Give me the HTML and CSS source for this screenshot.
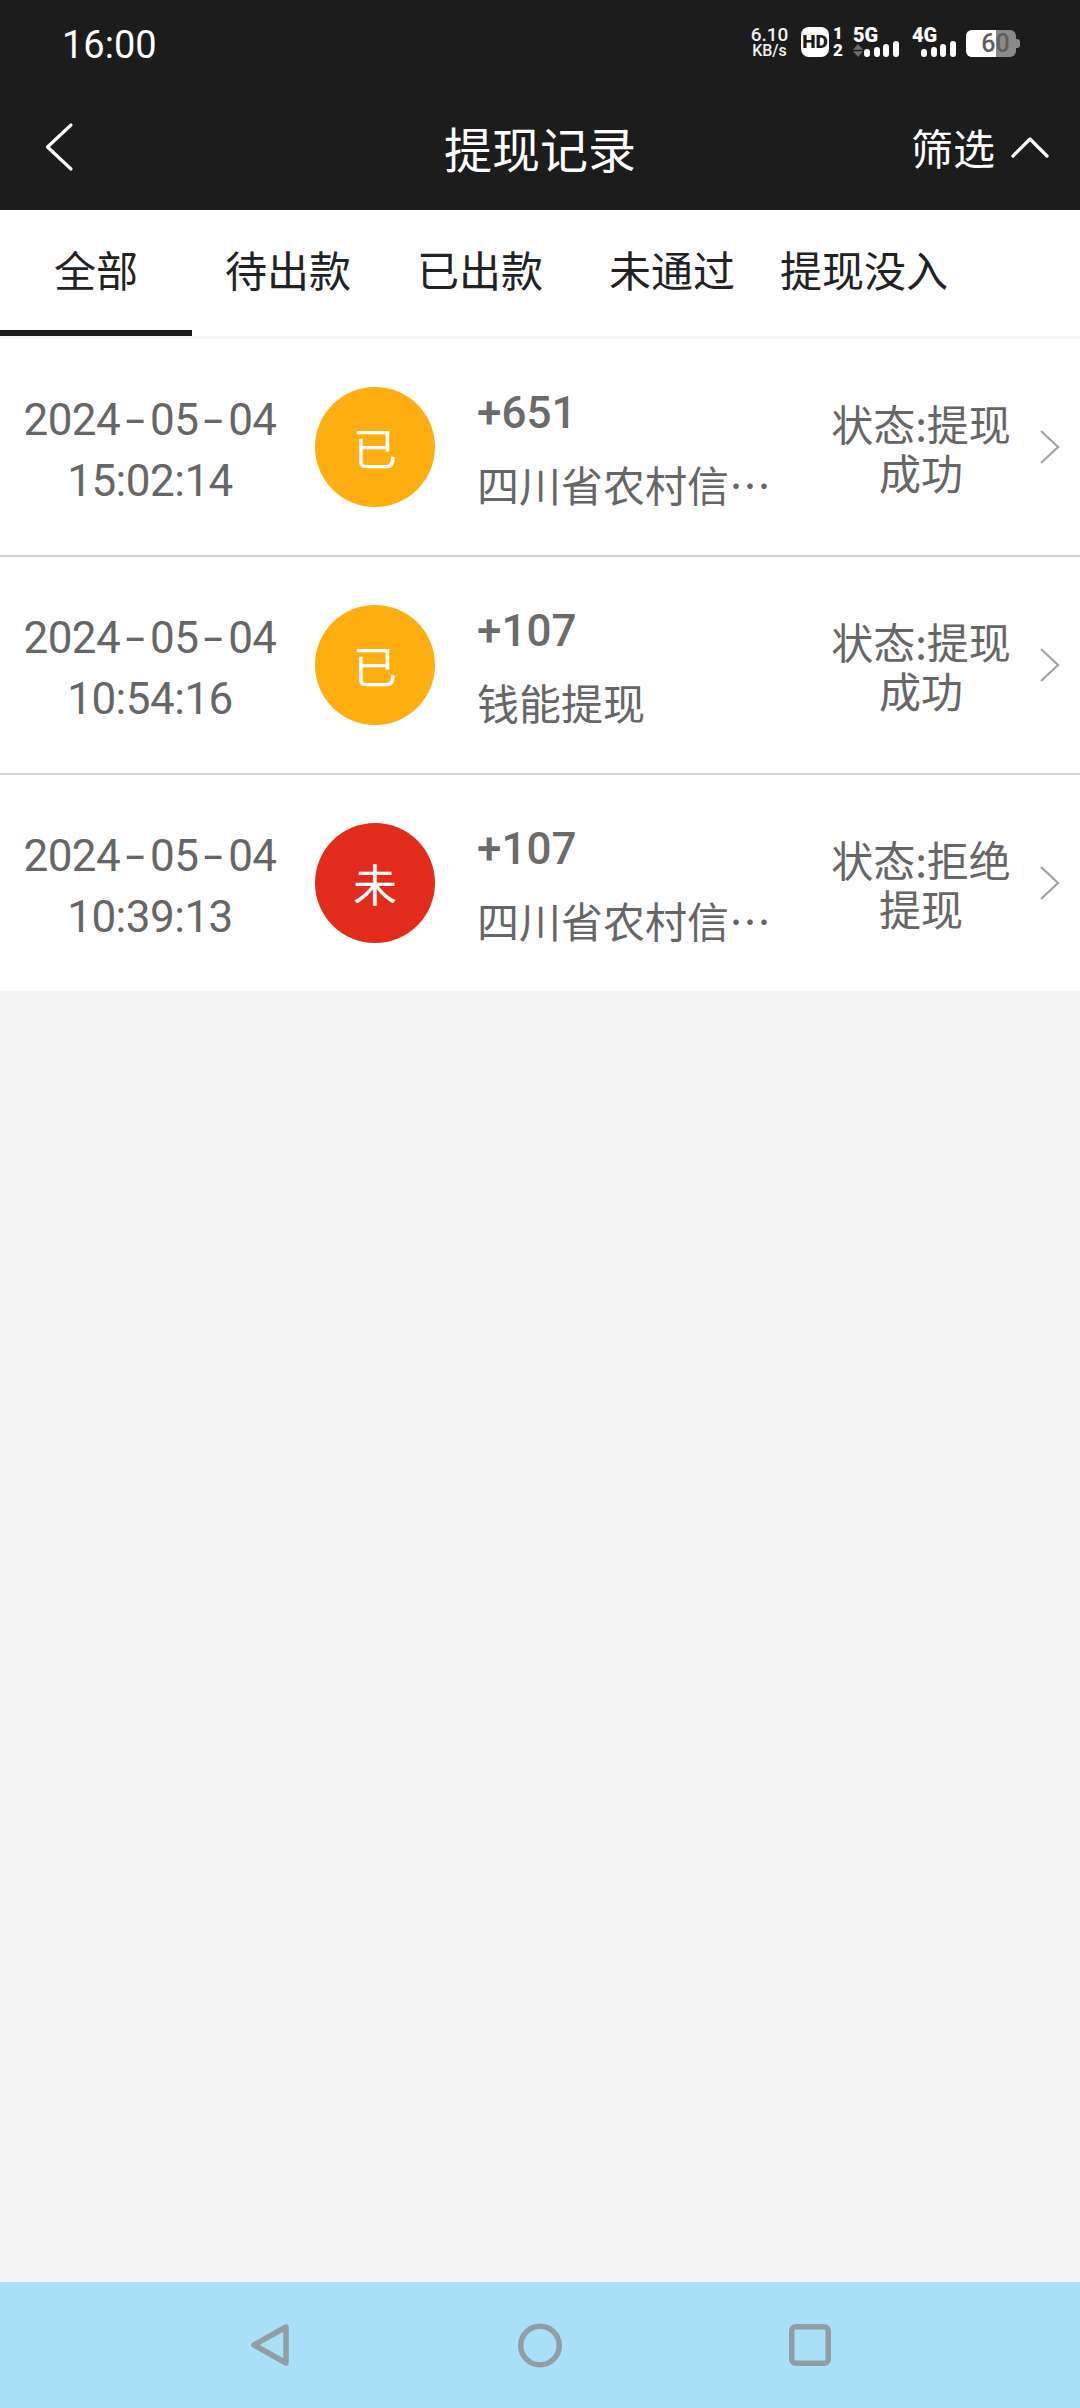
FILE: index.html
```html
<!DOCTYPE html>
<html lang="zh-CN">
<head>
<meta charset="utf-8">
<title>提现记录</title>
<link rel="stylesheet" href="styles.css">
</head>
<body>
<div class="page">
  <header class="top">
    <div class="status">
      <span class="time">16:00</span>
      <div class="indicators">
        <div class="speed"><span class="speed-num">6.10</span><span class="speed-unit">KB/s</span></div>
        <div class="hd"><span class="hd-box">HD</span><span class="hd-nums"><span>1</span><span>2</span></span></div>
        <div class="net net-5g">
          <span class="net-label">5G</span>
          <div class="net-row">
            <svg class="arrows" width="10" height="13" viewBox="0 0 10 13"><path d="M5 0l5 5.700H0zM0 7.300h10L5 13z" fill="#6e6e6e"/></svg>
            <span class="sig s1"></span><span class="sig s2"></span><span class="sig s3"></span><span class="sig s4"></span>
          </div>
        </div>
        <div class="net net-4g">
          <span class="net-label">4G</span>
          <div class="net-row">
            <span class="sig s1"></span><span class="sig s2"></span><span class="sig s3"></span><span class="sig s4"></span>
          </div>
        </div>
        <div class="battery"><div class="batt-body"><div class="batt-fill" style="width:60%"></div><span class="batt-num">60</span></div><span class="batt-cap"></span></div>
      </div>
    </div>
    <div class="nav">
      <svg class="back" width="30" height="50" viewBox="0 0 30 50"><path d="M27 3 3.500 25 27 47" fill="none" stroke="#fff" stroke-width="3.200" stroke-linecap="round" stroke-linejoin="round"/></svg>
      <h1 class="title">提现记录</h1>
      <div class="filter"><span>筛选</span>
        <svg width="38" height="24" viewBox="0 0 38 24"><path d="M2 21 19 4l17 17" fill="none" stroke="#fff" stroke-width="3.200" stroke-linecap="round" stroke-linejoin="round"/></svg>
      </div>
    </div>
  </header>
  <nav class="tabs">
    <span class="tab active">全部</span>
    <span class="tab">待出款</span>
    <span class="tab">已出款</span>
    <span class="tab">未通过</span>
    <span class="tab">提现没入</span>
  </nav>
  <main class="list">
    <div class="row">
      <div class="when"><span>2024<i class="hy">-</i>05<i class="hy">-</i>04</span><span>15:02:14</span></div>
      <div class="badge amber">已</div>
      <div class="info"><span class="amount">+651</span><span class="bank">四川省农村信…</span></div>
      <div class="state">状态:提现成功</div>
      <svg class="chev" width="22" height="36" viewBox="0 0 22 36"><path d="M2 2l17 16L2 34" fill="none" stroke="#a3a3a3" stroke-width="2.200"/></svg>
    </div>
    <div class="row">
      <div class="when"><span>2024<i class="hy">-</i>05<i class="hy">-</i>04</span><span>10:54:16</span></div>
      <div class="badge amber">已</div>
      <div class="info"><span class="amount">+107</span><span class="bank">钱能提现</span></div>
      <div class="state">状态:提现成功</div>
      <svg class="chev" width="22" height="36" viewBox="0 0 22 36"><path d="M2 2l17 16L2 34" fill="none" stroke="#a3a3a3" stroke-width="2.200"/></svg>
    </div>
    <div class="row">
      <div class="when"><span>2024<i class="hy">-</i>05<i class="hy">-</i>04</span><span>10:39:13</span></div>
      <div class="badge red">未</div>
      <div class="info"><span class="amount">+107</span><span class="bank">四川省农村信…</span></div>
      <div class="state">状态:拒绝提现</div>
      <svg class="chev" width="22" height="36" viewBox="0 0 22 36"><path d="M2 2l17 16L2 34" fill="none" stroke="#a3a3a3" stroke-width="2.200"/></svg>
    </div>
  </main>
  <div class="spacer"></div>
  <footer class="sysnav">
    <svg width="38" height="42" viewBox="0 0 38 42"><path d="M3 21 35 3v36z" fill="none" stroke="#929ea6" stroke-width="5.500" stroke-linejoin="round"/></svg>
    <svg class="home" width="44" height="45" viewBox="0 0 44 45"><circle cx="22" cy="22.500" r="19.300" fill="none" stroke="#929ea6" stroke-width="5.500"/></svg>
    <svg class="recent" width="42" height="42" viewBox="0 0 42 42"><rect x="2.750" y="2.750" width="36.500" height="36.500" rx="4" fill="none" stroke="#929ea6" stroke-width="5.500"/></svg>
  </footer>
</div>
</body>
</html>
```
FILE: styles.css
```css
* { box-sizing: border-box; margin: 0; padding: 0; }
html, body { width: 1080px; height: 2408px; overflow: hidden; }
body { font-family: "Noto Sans CJK SC", "Noto Sans", Roboto, sans-serif; background: #f4f4f4; }
.page { display: flex; flex-direction: column; width: 1080px; height: 2408px; }

.top { background: #1c1c1c; color: #fff; height: 210px; display: flex; flex-direction: column; flex-shrink: 0; }
.status { height: 90px; display: flex; align-items: center; justify-content: space-between; padding: 0 60px 0 62px; }
.time { font-family: Roboto, sans-serif; font-size: 38px; line-height: 44px; }
.indicators { display: flex; align-items: flex-start; height: 30px; margin-bottom: 6px; font-family: Roboto, sans-serif; }
.speed { width: 35px; display: flex; flex-direction: column; align-items: center; color: #f2f2f2; white-space: nowrap; font-weight: 500; }
.speed-num { font-size: 19px; line-height: 15px; margin-bottom: 2px; }
.speed-unit { font-size: 16px; line-height: 13px; }
.hd { display: flex; margin-left: 14px; gap: 4px; }
.hd-box { width: 28px; height: 30px; background: #fff; color: #1c1c1c; border-radius: 8px; font-size: 19px; font-weight: 900; line-height: 30px; text-align: center; }
.hd-nums { width: 10px; height: 30px; display: flex; flex-direction: column; justify-content: space-between; align-items: center; font-size: 17px; line-height: 13px; font-weight: 900; }
.net { display: flex; flex-direction: column; width: 46px; margin-left: 10px; }
.net-label { font-size: 20px; line-height: 14px; margin-top: 1px; font-weight: 900; }
.net-row { display: flex; align-items: flex-end; justify-content: flex-end; gap: 3.600px; height: 15px; }
.net-4g { width: 44px; margin-left: 13px; }
.arrows { margin-right: -2.600px; }
.sig { width: 6px; background: #fff; border-radius: 3px; display: block; flex-shrink: 0; }
.s1 { height: 8px; } .s2 { height: 10px; } .s3 { height: 13px; } .s4 { height: 16px; }
.battery { display: flex; align-items: center; margin-left: 10px; margin-top: 3px; }
.batt-body { position: relative; width: 50px; height: 27px; border-radius: 6px; background: #8a8a8a; overflow: hidden; display: flex; align-items: center; justify-content: center; }
.batt-fill { position: absolute; left: 0; top: 0; bottom: 0; background: #fff; }
.batt-num { position: relative; font-size: 25px; line-height: 27px; font-weight: 500; color: #5f5f5f; margin-left: 9px; }
.batt-cap { width: 4px; height: 9px; background: #8a8a8a; border-radius: 0 3px 3px 0; }

.nav { flex: 1; display: flex; align-items: center; justify-content: space-between; position: relative; padding: 0 31px 6px 44px; }
.back { display: block; }
.title { position: absolute; left: 0; right: 0; text-align: center; font-size: 48px; line-height: 60px; font-weight: 400; color: #fff; }
.filter { display: flex; align-items: center; gap: 16px; font-size: 42px; line-height: 52px; }

.tabs { background: #fff; height: 126px; display: flex; flex-shrink: 0; }
.tab { width: 192px; display: flex; align-items: center; justify-content: center; font-size: 42px; color: #222; white-space: nowrap; padding-bottom: 4px; border-bottom: 6px solid transparent; }
.tab.active { border-bottom-color: #1c1c1c; }

.list { margin-top: 3px; background: #fff; flex-shrink: 0; }
.row { height: 218px; display: flex; align-items: center; border-bottom: 2px solid #d2d2d2; padding-left: 24px; }
.row:last-child { border-bottom: 0; height: 216px; }
.when { width: 252px; padding-top: 8px; display: flex; flex-direction: column; align-items: center; font-family: Roboto, sans-serif; font-size: 44px; line-height: 61px; color: #666; letter-spacing: -0.500px; white-space: nowrap; flex-shrink: 0; }
.hy { display: inline-block; font-style: normal; margin: 0 9px; transform: scaleX(1.600); }
.badge { width: 120px; height: 120px; border-radius: 50%; margin-left: 39px; color: #fff; font-size: 44px; display: flex; align-items: center; justify-content: center; flex-shrink: 0; }
.amber { background: #ffae11; }
.red { background: #e22b1b; }
.info { width: 300px; margin-left: 42px; padding-top: 4px; display: flex; flex-direction: column; gap: 14px; color: #666; flex-shrink: 0; }
.amount { font-family: Roboto, sans-serif; font-size: 44px; line-height: 56px; font-weight: 500; color: #6b6b6b; }
.bank { font-size: 42px; line-height: 58px; white-space: nowrap; }
.state { width: 190px; margin-left: 49px; text-align: center; font-size: 42px; line-height: 49px; color: #666; flex-shrink: 0; }
.chev { margin-left: 23px; flex-shrink: 0; }

.spacer { flex: 1; }
.sysnav { height: 126px; background: #aae0f7; display: flex; align-items: center; padding-left: 251px; flex-shrink: 0; }
.home { margin-left: 229px; }
.recent { margin-left: 227px; }
```
